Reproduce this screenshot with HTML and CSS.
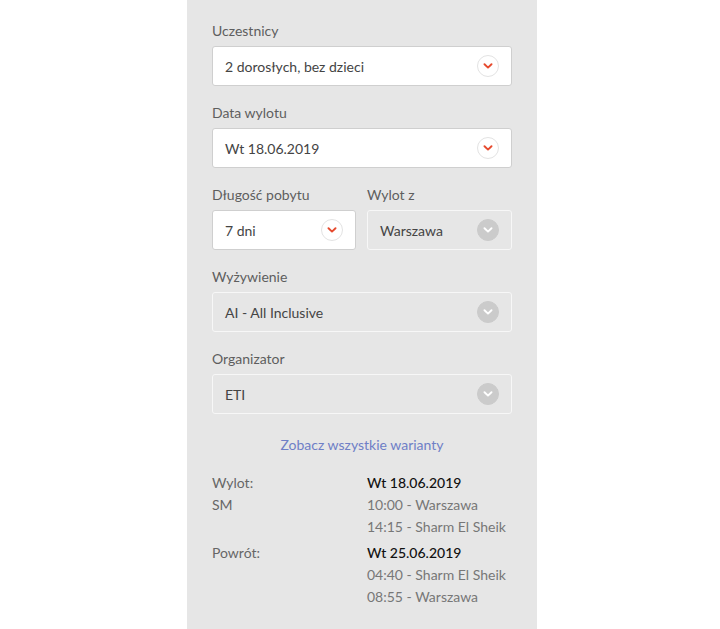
FILE: index.html
```html
<!DOCTYPE html>
<html lang="pl">
<head>
<meta charset="utf-8">
<link rel="stylesheet" href="styles.css">
</head>
<body>
<div class="panel">
  <div class="field">
    <div class="label">Uczestnicy</div>
    <div class="select">
      <span class="value">2 dorosłych, bez dzieci</span>
      <span class="arrow"><svg width="10" height="6" viewBox="0 0 10 6"><path d="M1.5 1.2 L5 4.6 L8.5 1.2" fill="none" stroke-width="1.9" stroke-linecap="round" stroke-linejoin="round"/></svg></span>
    </div>
  </div>
  <div class="field">
    <div class="label">Data wylotu</div>
    <div class="select">
      <span class="value">Wt 18.06.2019</span>
      <span class="arrow"><svg width="10" height="6" viewBox="0 0 10 6"><path d="M1.5 1.2 L5 4.6 L8.5 1.2" fill="none" stroke-width="1.9" stroke-linecap="round" stroke-linejoin="round"/></svg></span>
    </div>
  </div>
  <div class="row">
    <div class="field">
      <div class="label">Długość pobytu</div>
      <div class="select">
        <span class="value">7 dni</span>
        <span class="arrow"><svg width="10" height="6" viewBox="0 0 10 6"><path d="M1.5 1.2 L5 4.6 L8.5 1.2" fill="none" stroke-width="1.9" stroke-linecap="round" stroke-linejoin="round"/></svg></span>
      </div>
    </div>
    <div class="field">
      <div class="label">Wylot z</div>
      <div class="select disabled">
        <span class="value">Warszawa</span>
        <span class="arrow"><svg width="10" height="6" viewBox="0 0 10 6"><path d="M1.5 1.2 L5 4.6 L8.5 1.2" fill="none" stroke-width="1.9" stroke-linecap="round" stroke-linejoin="round"/></svg></span>
      </div>
    </div>
  </div>
  <div class="field">
    <div class="label">Wyżywienie</div>
    <div class="select disabled">
      <span class="value">AI - All Inclusive</span>
      <span class="arrow"><svg width="10" height="6" viewBox="0 0 10 6"><path d="M1.5 1.2 L5 4.6 L8.5 1.2" fill="none" stroke-width="1.9" stroke-linecap="round" stroke-linejoin="round"/></svg></span>
    </div>
  </div>
  <div class="field">
    <div class="label">Organizator</div>
    <div class="select disabled">
      <span class="value">ETI</span>
      <span class="arrow"><svg width="10" height="6" viewBox="0 0 10 6"><path d="M1.5 1.2 L5 4.6 L8.5 1.2" fill="none" stroke-width="1.9" stroke-linecap="round" stroke-linejoin="round"/></svg></span>
    </div>
  </div>
  <a class="link" href="#">Zobacz wszystkie warianty</a>
  <div class="flight">
    <div class="col-left">
      <div>Wylot:</div>
      <div>SM</div>
    </div>
    <div class="col-right">
      <div class="date">Wt 18.06.2019</div>
      <div>10:00 - Warszawa</div>
      <div>14:15 - Sharm El Sheik</div>
    </div>
  </div>
  <div class="flight">
    <div class="col-left">
      <div>Powrót:</div>
    </div>
    <div class="col-right">
      <div class="date">Wt 25.06.2019</div>
      <div>04:40 - Sharm El Sheik</div>
      <div>08:55 - Warszawa</div>
    </div>
  </div>
</div>
</body>
</html>
```
FILE: styles.css
```css
* { box-sizing: border-box; }
html, body { margin: 0; padding: 0; background: #fff; }
body {
  font-family: Lato, "Noto Sans", sans-serif;
  font-size: 14px;
  color: #555;
}
.panel {
  width: 350px;
  min-height: 629px;
  margin-left: 187px;
  background: #e6e6e6;
  padding: 21px 25px 0 25px;
  display: flex;
  flex-direction: column;
}
.field { margin-bottom: 17px; }
.label {
  line-height: 20px;
  margin-bottom: 5px;
  color: #5e5e5e;
}
.select {
  height: 40px;
  background: #fff;
  border: 1px solid #cfcfcf;
  border-radius: 3px;
  display: flex;
  align-items: center;
  justify-content: space-between;
  padding: 0 12px 0 12px;
  color: #444;
  white-space: nowrap;
}
.select .arrow {
  width: 22px;
  height: 22px;
  border-radius: 50%;
  border: 1px solid #e3e3e3;
  background: #fff;
  display: flex;
  align-items: center;
  justify-content: center;
  flex-shrink: 0;
}
.select .arrow svg path { stroke: #e64a2e; }
.select.disabled {
  background: #e6e6e6;
  border-color: #f7f7f7;
}
.select.disabled .arrow {
  background: #cbcbcb;
  border-color: #cbcbcb;
}
.select.disabled .arrow svg path { stroke: #fff; }
.row {
  display: grid;
  grid-template-columns: 144px 145px;
  column-gap: 11px;
}
.link {
  display: block;
  text-align: center;
  line-height: 20px;
  margin-top: 4px;
  margin-bottom: 17px;
  color: #6f7fc6;
  text-decoration: none;
}
.flight {
  display: grid;
  grid-template-columns: 155px 1fr;
  line-height: 22px;
  margin-bottom: 4px;
  white-space: nowrap;
}
.col-left { color: #666; }
.col-right { color: #777; }
.col-right .date { color: #111; font-weight: 500; }
```
